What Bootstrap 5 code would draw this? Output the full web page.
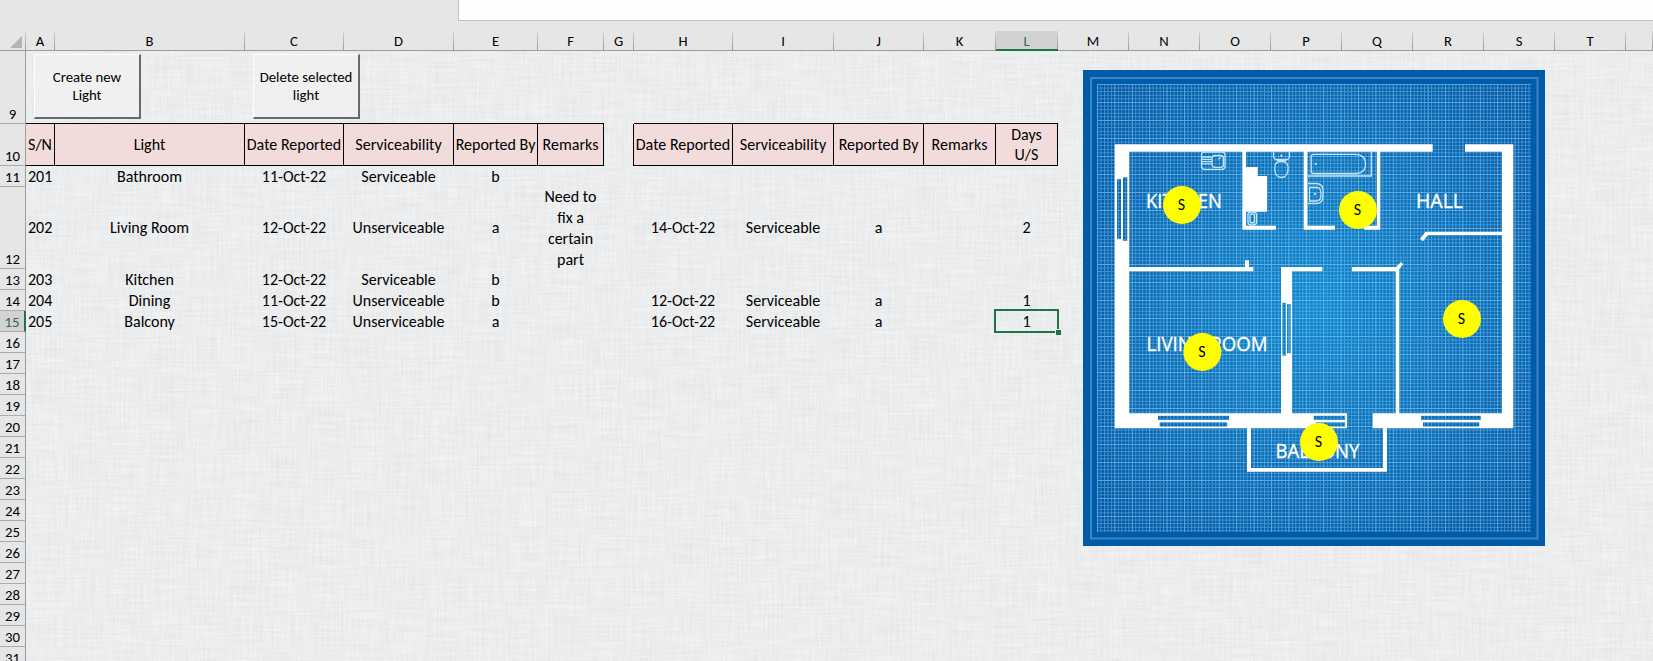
<!DOCTYPE html>
<html lang="en">
<head>
<meta charset="utf-8">
<title>Light tracker</title>
<link href="https://cdn.jsdelivr.net/npm/bootstrap@5.3.0/dist/css/bootstrap.min.css" rel="stylesheet">
<script src="https://cdn.jsdelivr.net/npm/bootstrap@5.3.0/dist/js/bootstrap.bundle.min.js"></script>
<style>
  body { font-family: Carlito, Lato, sans-serif; font-size: 16px; line-height: 20px; color: #000; background: #e6e6e6; height: 661px; }
  .formula-bar { height: 31px; padding-left: 458px; }
  .formula-input { height: 21px; background: #fdfdfd; border-left: 1px solid #bfc3c1; border-bottom: 1px solid #bfc3c1; }
  .weave { left: 26px; top: 51px; width: 1627px; height: 610px; }
  .sheet { table-layout: fixed; width: 1653px; border-collapse: separate; border-spacing: 0; position: relative; }
  .sheet th, .sheet td { padding: 0; font-weight: 400; height: 21px; white-space: nowrap; }
  .sheet td { text-align: center; vertical-align: middle; padding-right: 1px; }
  .sheet thead th { height: 20px; line-height: 17px; padding-top: 2px; padding-right: 1px; text-align: center; font-size: 14.6px; background: linear-gradient(#d2d2d2, #9b9b9b) right / 1px 100% no-repeat #e6e6e6; border-bottom: 1px solid #9a9d9e; }
  .sheet thead th.picked { background-color: #d2d2d2; color: #33694d; border-bottom: 2px solid #217346; line-height: 16px; }
  .sheet tbody th { text-align: center; vertical-align: bottom; font-size: 14.8px; line-height: 18px; background: #e6e6e6; border-right: 1px solid #9a9d9e; border-bottom: 1px solid #ababab; }
  .sheet tbody th.picked { background: #d2d2d2; color: #33694d; border-right: 2px solid #217346; }
  .sheet .controls-row td { height: 73px; vertical-align: top; }
  .sheet .heading-row td { height: 42px; line-height: 20px; padding: 1px 0 0; background: #f2dcdb; border-right: 1px solid #000; border-bottom: 1px solid #000; box-shadow: 0 -1px #000; }
  .sheet .heading-row td.gap-col { background: none; border-bottom: 0; box-shadow: none; }
  .sheet .heading-row td.blank { background: none; border: 0; box-shadow: none; }
  .remark { line-height: 21px; margin: -1px 0; }
  .sheet td.serial { text-align: left; padding-left: 2px; }
  .sheet .tall td { height: 82px; }
  .form-button { width: 107px; height: 65px; font-size: 14.8px; line-height: 18px; color: #000; background: #f0f0f0; border: 1px solid #fff; border-right: 2px solid #696969; border-bottom: 2px solid #696969; border-radius: 0; padding: 0; white-space: nowrap; }
  .controls { padding: 3px 0 0 8px; gap: 112px; }
  .active-cell { position: relative; }
  .active-cell::before { content: ""; position: absolute; left: -2px; right: -1px; top: -2px; bottom: -1px; border: 2px solid #217346; }
  .active-cell::after { content: ""; position: absolute; right: -3px; bottom: -3px; width: 6px; height: 6px; background: #217346; border: 1px solid #eceeef; border-right: 0; border-bottom: 0; }
  .plan { left: 1083px; top: 70px; }
  .plan .room { font: 20px "Open Sans", "Noto Sans", sans-serif; fill: #fff; stroke: #fff; stroke-width: .35px; }
  .plan .pin text { font-size: 16px; text-anchor: middle; fill: #000; }
  .plan .pin circle { fill: #ff0; }
</style>
</head>
<body class="position-relative overflow-hidden">
<div class="formula-bar"><div class="formula-input"></div></div>

<svg class="weave position-absolute" width="1627" height="610" aria-hidden="true">
  <filter id="linen" x="0" y="0" width="100%" height="100%" color-interpolation-filters="sRGB">
    <feTurbulence type="fractalNoise" baseFrequency="0.025 0.45" numOctaves="2" seed="4" result="h"/>
    <feTurbulence type="fractalNoise" baseFrequency="0.45 0.025" numOctaves="2" seed="9" result="v"/>
    <feComposite in="h" in2="v" operator="arithmetic" k2="0.5" k3="0.5"/>
    <feColorMatrix values="0.11 0 0 0 0.866  0.11 0 0 0 0.873  0.11 0 0 0 0.877  0 0 0 0 1"/>
  </filter>
  <rect width="1627" height="610" fill="#e9ebec" filter="url(#linen)"/>
</svg>

<table class="sheet">
  <colgroup>
    <col style="width:26px"><col style="width:29px"><col style="width:190px"><col style="width:99px"><col style="width:110px"><col style="width:84px"><col style="width:66px"><col style="width:30px"><col style="width:99px"><col style="width:101px"><col style="width:90px"><col style="width:72px"><col style="width:62px"><col style="width:71px"><col style="width:71px"><col style="width:71px"><col style="width:71px"><col style="width:71px"><col style="width:71px"><col style="width:71px"><col style="width:71px"><col style="width:27px">
  </colgroup>
  <thead>
    <tr><th><svg class="d-block" width="25" height="16"><path d="M22 2V14H10Z" fill="#b4b4b4"/></svg></th><th>A</th><th>B</th><th>C</th><th>D</th><th>E</th><th>F</th><th>G</th><th>H</th><th>I</th><th>J</th><th>K</th><th class="picked">L</th><th>M</th><th>N</th><th>O</th><th>P</th><th>Q</th><th>R</th><th>S</th><th>T</th><th></th></tr>
  </thead>
  <tbody>
    <tr class="controls-row"><th>9</th><td colspan="21"><div class="controls d-flex"><button class="form-button">Create new<br>Light</button><button class="form-button">Delete selected<br>light</button></div></td></tr>
    <tr class="heading-row"><th>10</th><td>S/N</td><td>Light</td><td>Date Reported</td><td>Serviceability</td><td>Reported By</td><td>Remarks</td><td class="gap-col"></td><td>Date Reported</td><td>Serviceability</td><td>Reported By</td><td>Remarks</td><td>Days<br>U/S</td><td class="blank" colspan="9"></td></tr>
    <tr><th>11</th><td class="serial">201</td><td>Bathroom</td><td>11-Oct-22</td><td>Serviceable</td><td>b</td><td colspan="16"></td></tr>
    <tr class="tall"><th>12</th><td class="serial">202</td><td>Living Room</td><td>12-Oct-22</td><td>Unserviceable</td><td>a</td><td><div class="remark">Need to<br>fix a<br>certain<br>part</div></td><td></td><td>14-Oct-22</td><td>Serviceable</td><td>a</td><td></td><td>2</td><td colspan="9"></td></tr>
    <tr><th>13</th><td class="serial">203</td><td>Kitchen</td><td>12-Oct-22</td><td>Serviceable</td><td>b</td><td colspan="16"></td></tr>
    <tr><th>14</th><td class="serial">204</td><td>Dining</td><td>11-Oct-22</td><td>Unserviceable</td><td>b</td><td></td><td></td><td>12-Oct-22</td><td>Serviceable</td><td>a</td><td></td><td>1</td><td colspan="9"></td></tr>
    <tr><th class="picked">15</th><td class="serial">205</td><td>Balcony</td><td>15-Oct-22</td><td>Unserviceable</td><td>a</td><td></td><td></td><td>16-Oct-22</td><td>Serviceable</td><td>a</td><td></td><td class="active-cell">1</td><td colspan="9"></td></tr>
    <tr><th>16</th><td colspan="21"></td></tr>
    <tr><th>17</th><td colspan="21"></td></tr>
    <tr><th>18</th><td colspan="21"></td></tr>
    <tr><th>19</th><td colspan="21"></td></tr>
    <tr><th>20</th><td colspan="21"></td></tr>
    <tr><th>21</th><td colspan="21"></td></tr>
    <tr><th>22</th><td colspan="21"></td></tr>
    <tr><th>23</th><td colspan="21"></td></tr>
    <tr><th>24</th><td colspan="21"></td></tr>
    <tr><th>25</th><td colspan="21"></td></tr>
    <tr><th>26</th><td colspan="21"></td></tr>
    <tr><th>27</th><td colspan="21"></td></tr>
    <tr><th>28</th><td colspan="21"></td></tr>
    <tr><th>29</th><td colspan="21"></td></tr>
    <tr><th>30</th><td colspan="21"></td></tr>
    <tr><th>31</th><td colspan="21"></td></tr>
  </tbody>
</table>

<!-- Floor plan with one pin per light -->
<svg class="plan position-absolute" width="462" height="476" viewBox="1083 70 462 476">
  <defs>
    <radialGradient id="glow" gradientUnits="userSpaceOnUse" cx="1314" cy="305" r="290">
      <stop offset="0" stop-color="#0787d0"/><stop offset=".45" stop-color="#0870ba"/><stop offset="1" stop-color="#0056a4"/>
    </radialGradient>
    <pattern id="minor" patternUnits="userSpaceOnUse" x="1097" y="84" width="3.48" height="3.6">
      <path d="M0 .5H3.48M.5 0V3.6" stroke="#7cc0ec" stroke-opacity=".55" stroke-width="1"/>
    </pattern>
    <pattern id="major" patternUnits="userSpaceOnUse" x="1097" y="84" width="17.4" height="18">
      <path d="M0 .5H17.4M.5 0V18" stroke="#9bd2f5" stroke-opacity=".3" stroke-width="1"/>
    </pattern>
  </defs>
  <path fill="#005ba8" d="M1083 70h462v476h-462z"/>
  <path fill="none" stroke="#3a86c6" stroke-width="2" d="M1091 78h446.500v460.500h-446.500z"/>
  <path fill="url(#glow)" d="M1097 84h434v448h-434z"/>
  <path fill="url(#minor)" d="M1097 84h434v448h-434z"/>
  <path fill="url(#major)" d="M1097 84h434v448h-434z"/>

  <g fill="#fff">
    <!-- outer walls, with the window panes left open -->
    <path fill-rule="evenodd" d="M1114.700 144.300H1432.700V151.700H1129.300V413.300H1347V428.300H1114.700Z
      M1117 179.300h4v59.400h-4z M1123 177.300h4.300v63.400h-4.300z
      M1158 415.700h71v4.300h-71z M1159.700 422.300h67.600v4.400h-67.600z
      M1313.700 415.700h31.500v4.300h-31.500z M1316 422.300h29.200v4.400h-29.200z"/>
    <path fill-rule="evenodd" d="M1465 144.300H1513.300V428.300H1372.700V413.300H1502V151.700H1465Z
      M1421 415.700h60v4.300h-60z M1423 422.300h56.300v4.400h-56.300z"/>
    <!-- inner walls -->
    <path d="M1242.300 151h3.700v74.700h30v4h-33.700z M1246 167h11.700v9H1267v35.700h-21z"/>
    <path d="M1303.700 151h3.800v74.700H1335v4h-31.300z M1377 151h3.300v78.700H1364v-4h13z"/>
    <path d="M1129 267h116v-6.700h4v6.700h4.300v4.300H1129z"/>
    <path fill-rule="evenodd" d="M1281 267h41.300v4.300H1292V414h-11z M1282.300 302.700h3.700v53h-3.700z M1287 304h3.700v49.300h-3.700z"/>
    <path d="M1352 267h44l5-5 2.200 2.200-3.900 4.800V414h-3.600V271.300H1352z"/>
    <path d="M1502 231.700h-76.500l-5.500 7 3 2.600 5-6.300h74z"/>
    <path d="M1247 428h4v40h132v-40h4v43.700h-140z"/>
  </g>

  <g fill="none" stroke="#c4e6fb" stroke-width="1.300">
    <rect x="1201.500" y="152" width="23.500" height="17.300" rx="3"/>
    <rect x="1212" y="155.500" width="11.500" height="11.800" rx="3"/>
    <path d="M1202 157h9.500M1202 159.300h9.500M1202 161.600h9.500M1202 163.900h9.500M1218 159l3-1.500"/>
    <path d="M1273.500 152v4q0 3.500 3.500 3.500h9q3.500 0 3.500-3.500v-4M1276.500 160.500h10"/>
    <path d="M1274.700 167.500q0-6 6.700-6t6.700 6q0 10-6.700 10t-6.700-10z"/>
    <path d="M1308 176h63.300V152M1313.500 154.300H1355q10.500 0 10.500 9.700t-10.500 9.500h-41.500q-2.300 0-2.300-2.300v-14.600q0-2.300 2.300-2.300z"/>
    <path d="M1308 183.500h8q7 0 7 7v6q0 7-7 7h-8M1309.500 187.500h8q3 0 3.500 6t-3.500 7.500h-8z"/>
    <rect x="1248" y="212" width="8.500" height="13" rx="3"/>
    <rect x="1250" y="214" width="4.500" height="9" rx="2"/>
  </g>
  <g fill="#dff3ff"><circle cx="1281.300" cy="155.500" r="1"/><circle cx="1315.700" cy="164" r="1"/><circle cx="1315" cy="194" r="1"/></g>

  <text class="room" x="1146" y="207.700" textLength="76" lengthAdjust="spacingAndGlyphs">KITCHEN</text>
  <text class="room" x="1416" y="207.700" textLength="47" lengthAdjust="spacingAndGlyphs">HALL</text>
  <text class="room" x="1146.500" y="351" textLength="121" lengthAdjust="spacingAndGlyphs">LIVING ROOM</text>
  <text class="room" x="1275.500" y="458" textLength="84" lengthAdjust="spacingAndGlyphs">BALCONY</text>

  <g class="pin"><circle cx="1182" cy="205" r="19"/><text x="1181.500" y="210">S</text></g>
  <g class="pin"><circle cx="1358" cy="210" r="19"/><text x="1357.500" y="215">S</text></g>
  <g class="pin"><circle cx="1462" cy="319" r="19"/><text x="1461.500" y="324">S</text></g>
  <g class="pin"><circle cx="1202.300" cy="352" r="19"/><text x="1202" y="357">S</text></g>
  <g class="pin"><circle cx="1319" cy="442" r="19"/><text x="1318.500" y="447">S</text></g>
</svg>
</body>
</html>
